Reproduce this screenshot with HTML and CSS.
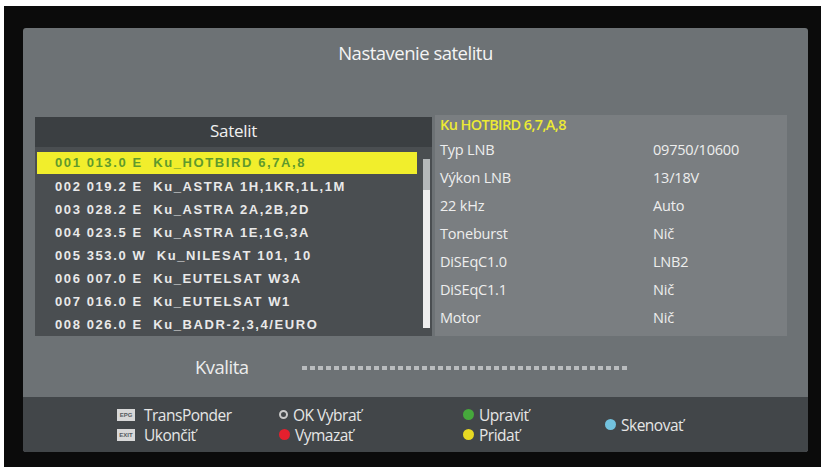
FILE: index.html
```html
<!DOCTYPE html>
<html lang="sk">
<head>
    <meta charset="UTF-8">
    <meta name="viewport" content="width=device-width, initial-scale=1.0">
    <title>Nastavenie satelitu</title>
    <link rel="stylesheet" href="styles.css">
</head>
<body>
    <div class="screen">
        <div class="panel">
            <h1 class="title">Nastavenie satelitu</h1>

            <div class="main">
                <div class="list">
                    <div class="list-head">Satelit</div>
                    <div class="list-body">
                        <div class="rows">
                            <div class="row selected">001 013.0 E&nbsp; Ku_HOTBIRD 6,7A,8</div>
                            <div class="row">002 019.2 E&nbsp; Ku_ASTRA 1H,1KR,1L,1M</div>
                            <div class="row">003 028.2 E&nbsp; Ku_ASTRA 2A,2B,2D</div>
                            <div class="row">004 023.5 E&nbsp; Ku_ASTRA 1E,1G,3A</div>
                            <div class="row">005 353.0 W&nbsp; Ku_NILESAT 101, 10</div>
                            <div class="row">006 007.0 E&nbsp; Ku_EUTELSAT W3A</div>
                            <div class="row">007 016.0 E&nbsp; Ku_EUTELSAT W1</div>
                            <div class="row">008 026.0 E&nbsp; Ku_BADR-2,3,4/EURO</div>
                        </div>
                        <div class="scroll"><div class="thumb"></div></div>
                    </div>
                </div>

                <div class="details">
                    <div class="details-head">Ku HOTBIRD 6,7,A,8</div>
                    <div class="param"><span class="label">Typ LNB</span><span class="value">09750/10600</span></div>
                    <div class="param"><span class="label">Výkon LNB</span><span class="value">13/18V</span></div>
                    <div class="param"><span class="label">22 kHz</span><span class="value">Auto</span></div>
                    <div class="param"><span class="label">Toneburst</span><span class="value">Nič</span></div>
                    <div class="param"><span class="label">DiSEqC1.0</span><span class="value">LNB2</span></div>
                    <div class="param"><span class="label">DiSEqC1.1</span><span class="value">Nič</span></div>
                    <div class="param"><span class="label">Motor</span><span class="value">Nič</span></div>
                </div>
            </div>

            <div class="quality">
                <span class="quality-label">Kvalita</span>
                <div class="quality-bar"></div>
            </div>

            <div class="footer">
                <div class="key"><span class="badge">EPG</span>TransPonder</div>
                <div class="key"><span class="ok"></span>OK Vybrať</div>
                <div class="key"><span class="dot green"></span>Upraviť</div>
                <div class="key scan"><span class="dot blue"></span>Skenovať</div>
                <div class="key"><span class="badge">EXIT</span>Ukončiť</div>
                <div class="key"><span class="dot red"></span>Vymazať</div>
                <div class="key"><span class="dot yellow"></span>Pridať</div>
            </div>
        </div>
    </div>
</body>
</html>
```

FILE: styles.css
```css
body {
    margin: 0;
    background-color: #ffffff;
    font-family: 'Open Sans', sans-serif;
}

.screen {
    margin: 6px 0 0 4px;
    width: 817px;
    height: 461px;
    box-sizing: border-box;
    padding: 22px 13px 15px 19px;
    background-color: #0b0b0b;
}

.panel {
    height: 100%;
    display: flex;
    flex-direction: column;
    background-color: #6d7275;
    border-radius: 3px;
    overflow: hidden;
}

.title {
    margin: 0;
    height: 87px;
    padding-top: 12px;
    box-sizing: border-box;
    text-align: center;
    font-size: 18.5px;
    font-weight: normal;
    letter-spacing: -0.5px;
    color: #f4f4f4;
}

.main {
    display: flex;
    align-items: flex-start;
    padding-left: 12px;
}

/* satellite list */
.list {
    width: 397px;
    height: 219px;
    margin-top: 2px;
    background-color: #4a4e51;
}

.list-head {
    height: 30px;
    line-height: 28px;
    text-align: center;
    font-size: 17px;
    letter-spacing: -0.3px;
    color: #f0f0f0;
    background-color: #3b3f42;
}

.list-body {
    display: flex;
    padding-top: 5px;
}

.rows {
    width: 380px;
    margin-left: 2px;
}

.row {
    height: 23px;
    line-height: 23px;
    padding-left: 18px;
    font-family: 'Liberation Sans', Arial, sans-serif;
    font-size: 13px;
    font-weight: bold;
    letter-spacing: 1.6px;
    color: #e9e9e9;
    white-space: pre;
}

.row.selected {
    height: 22px;
    margin-bottom: 1px;
    line-height: 22px;
    background-color: #f1ee2c;
    color: #5f9a2c;
}

.scroll {
    width: 7px;
    height: 169px;
    margin: 7px 0 0 6px;
    background-color: #b4b8ba;
}

.thumb {
    height: 138px;
    margin-top: 31px;
    background-color: #eeeeee;
}

/* LNB details */
.details {
    width: 347px;
    margin-left: 3px;
    padding: 0 0 4px 5px;
    background-color: #7a7e81;
}

.details-head {
    height: 21px;
    line-height: 20px;
    font-size: 14.5px;
    font-weight: 600;
    letter-spacing: -0.6px;
    color: #ecea34;
}

.param {
    display: flex;
    height: 28px;
    line-height: 28px;
    font-size: 14.5px;
    letter-spacing: -0.2px;
    color: #eeeeee;
}

.label {
    width: 213px;
}

/* signal quality */
.quality {
    display: flex;
    align-items: center;
    height: 61px;
    padding-left: 172px;
}

.quality-label {
    width: 107px;
    font-size: 18.5px;
    letter-spacing: -0.5px;
    color: #ececec;
}

.quality-bar {
    width: 327px;
    height: 4px;
    margin-top: 2px;
    background: repeating-linear-gradient(90deg, #b9bcbe 0 5px, transparent 5px 8px);
}

/* colour key bar */
.footer {
    flex: 1;
    display: grid;
    grid-template-columns: 162px 184px 142px auto;
    grid-auto-rows: 20px;
    align-content: center;
    padding-left: 94px;
    background-color: #424649;
}

.key {
    display: flex;
    align-items: center;
    font-size: 15.5px;
    letter-spacing: -0.5px;
    color: #e6e6e6;
}

.key.scan {
    grid-row: span 2;
}

.badge {
    width: 18px;
    height: 12px;
    margin-right: 9px;
    background-color: #d8d8d8;
    color: #555a5d;
    font-family: 'Liberation Sans', Arial, sans-serif;
    font-size: 6px;
    font-weight: bold;
    line-height: 12px;
    text-align: center;
    letter-spacing: 0;
}

.ok {
    width: 5px;
    height: 5px;
    margin-right: 5px;
    border: 2px solid #c9c9c9;
    border-radius: 50%;
}

.dot {
    width: 11px;
    height: 11px;
    margin-right: 5px;
    border-radius: 50%;
}

.red { background-color: #e4202e; }
.green { background-color: #46a83c; }
.yellow { background-color: #e7d923; }
.blue { background-color: #72c2de; }
```
